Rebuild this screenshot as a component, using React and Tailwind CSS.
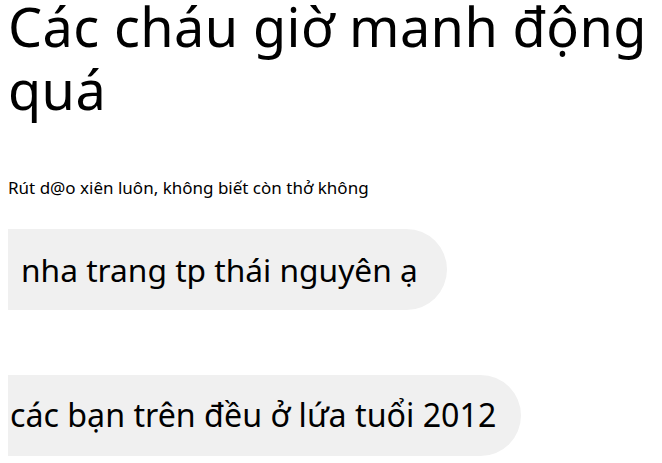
import React from 'react';

const App = () => {
  return (
    <div className="min-h-screen bg-white px-2 text-black" style={{ fontFamily: '"Noto Sans", "Open Sans", sans-serif' }}>
      {/* Title */}
      <h1 className="-mt-[5px] text-[54px] leading-[63px] tracking-[0.4px] font-normal">
        Các cháu giờ manh động quá
      </h1>

      <p className="mt-[57px] text-[17px] leading-[20px]">
        Rút d@o xiên luôn, không biết còn thở không
      </p>

      {/* Chat bubbles */}
      <div className="mt-[31px] flex flex-col gap-[65px]">
        <div className="w-[439px] h-[81px] bg-[#f0f0f0] rounded-r-full rounded-bl-[14px] flex items-center pl-[13px]">
          <span className="text-[31.7px]">nha trang tp thái nguyên ạ</span>
        </div>
        <div className="w-[513px] h-[81px] bg-[#f0f0f0] rounded-r-full flex items-center pl-[2px]">
          <span className="text-[32.2px]">các bạn trên đều ở lứa tuổi 2012</span>
        </div>
      </div>
    </div>
  );
};

export default App;
